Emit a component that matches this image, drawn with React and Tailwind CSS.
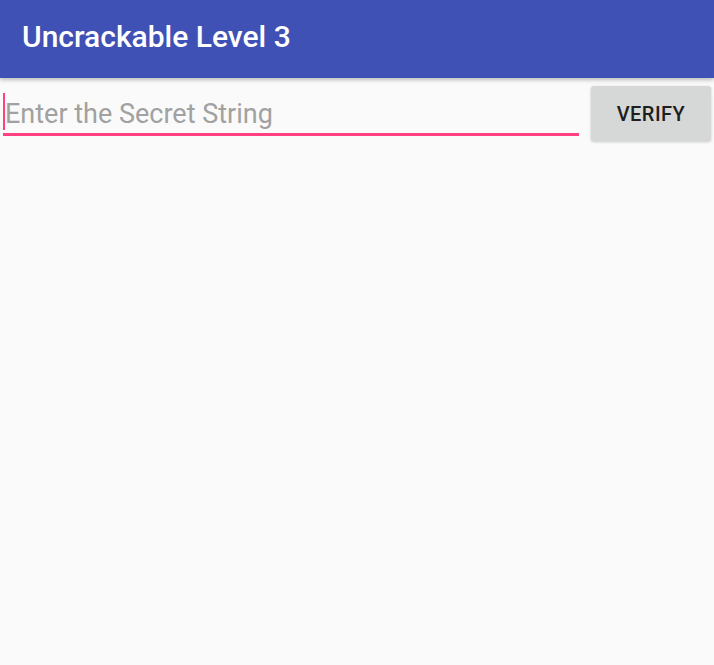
export default function App() {
  return (
    <div className="w-[714px] h-[665px] bg-[#fafafa] flex flex-col" style={{ fontFamily: "Roboto, 'Liberation Sans', sans-serif" }}>
      <div className="h-[78px] bg-[#3f51b5] flex items-center pl-[22px] shadow-[0_2px_4px_rgba(0,0,0,0.25)] relative z-10">
        <h1 className="text-white text-[30px] font-medium leading-none -mt-[4px]">Uncrackable Level 3</h1>
      </div>
      <div className="flex items-start pt-[10px] pl-[3px] pr-[3px]">
        <div className="w-[576px] h-[48px] border-b-[3px] border-[#ff4081] flex items-center">
          <div className="w-[2px] h-[37px] bg-[#ff4081] mt-[1px]" />
          <span className="text-[27px] text-[#a1a1a1] leading-none mt-[8px]">Enter the Secret String</span>
        </div>
        <button className="ml-[12px] w-[120px] h-[55px] -mt-[2px] rounded-[3px] bg-[#d6d7d7] shadow-[0_1px_3px_rgba(0,0,0,0.2)] text-[#1e1e1e] text-[20px] font-medium tracking-[0.5px]">
          VERIFY
        </button>
      </div>
    </div>
  );
}
